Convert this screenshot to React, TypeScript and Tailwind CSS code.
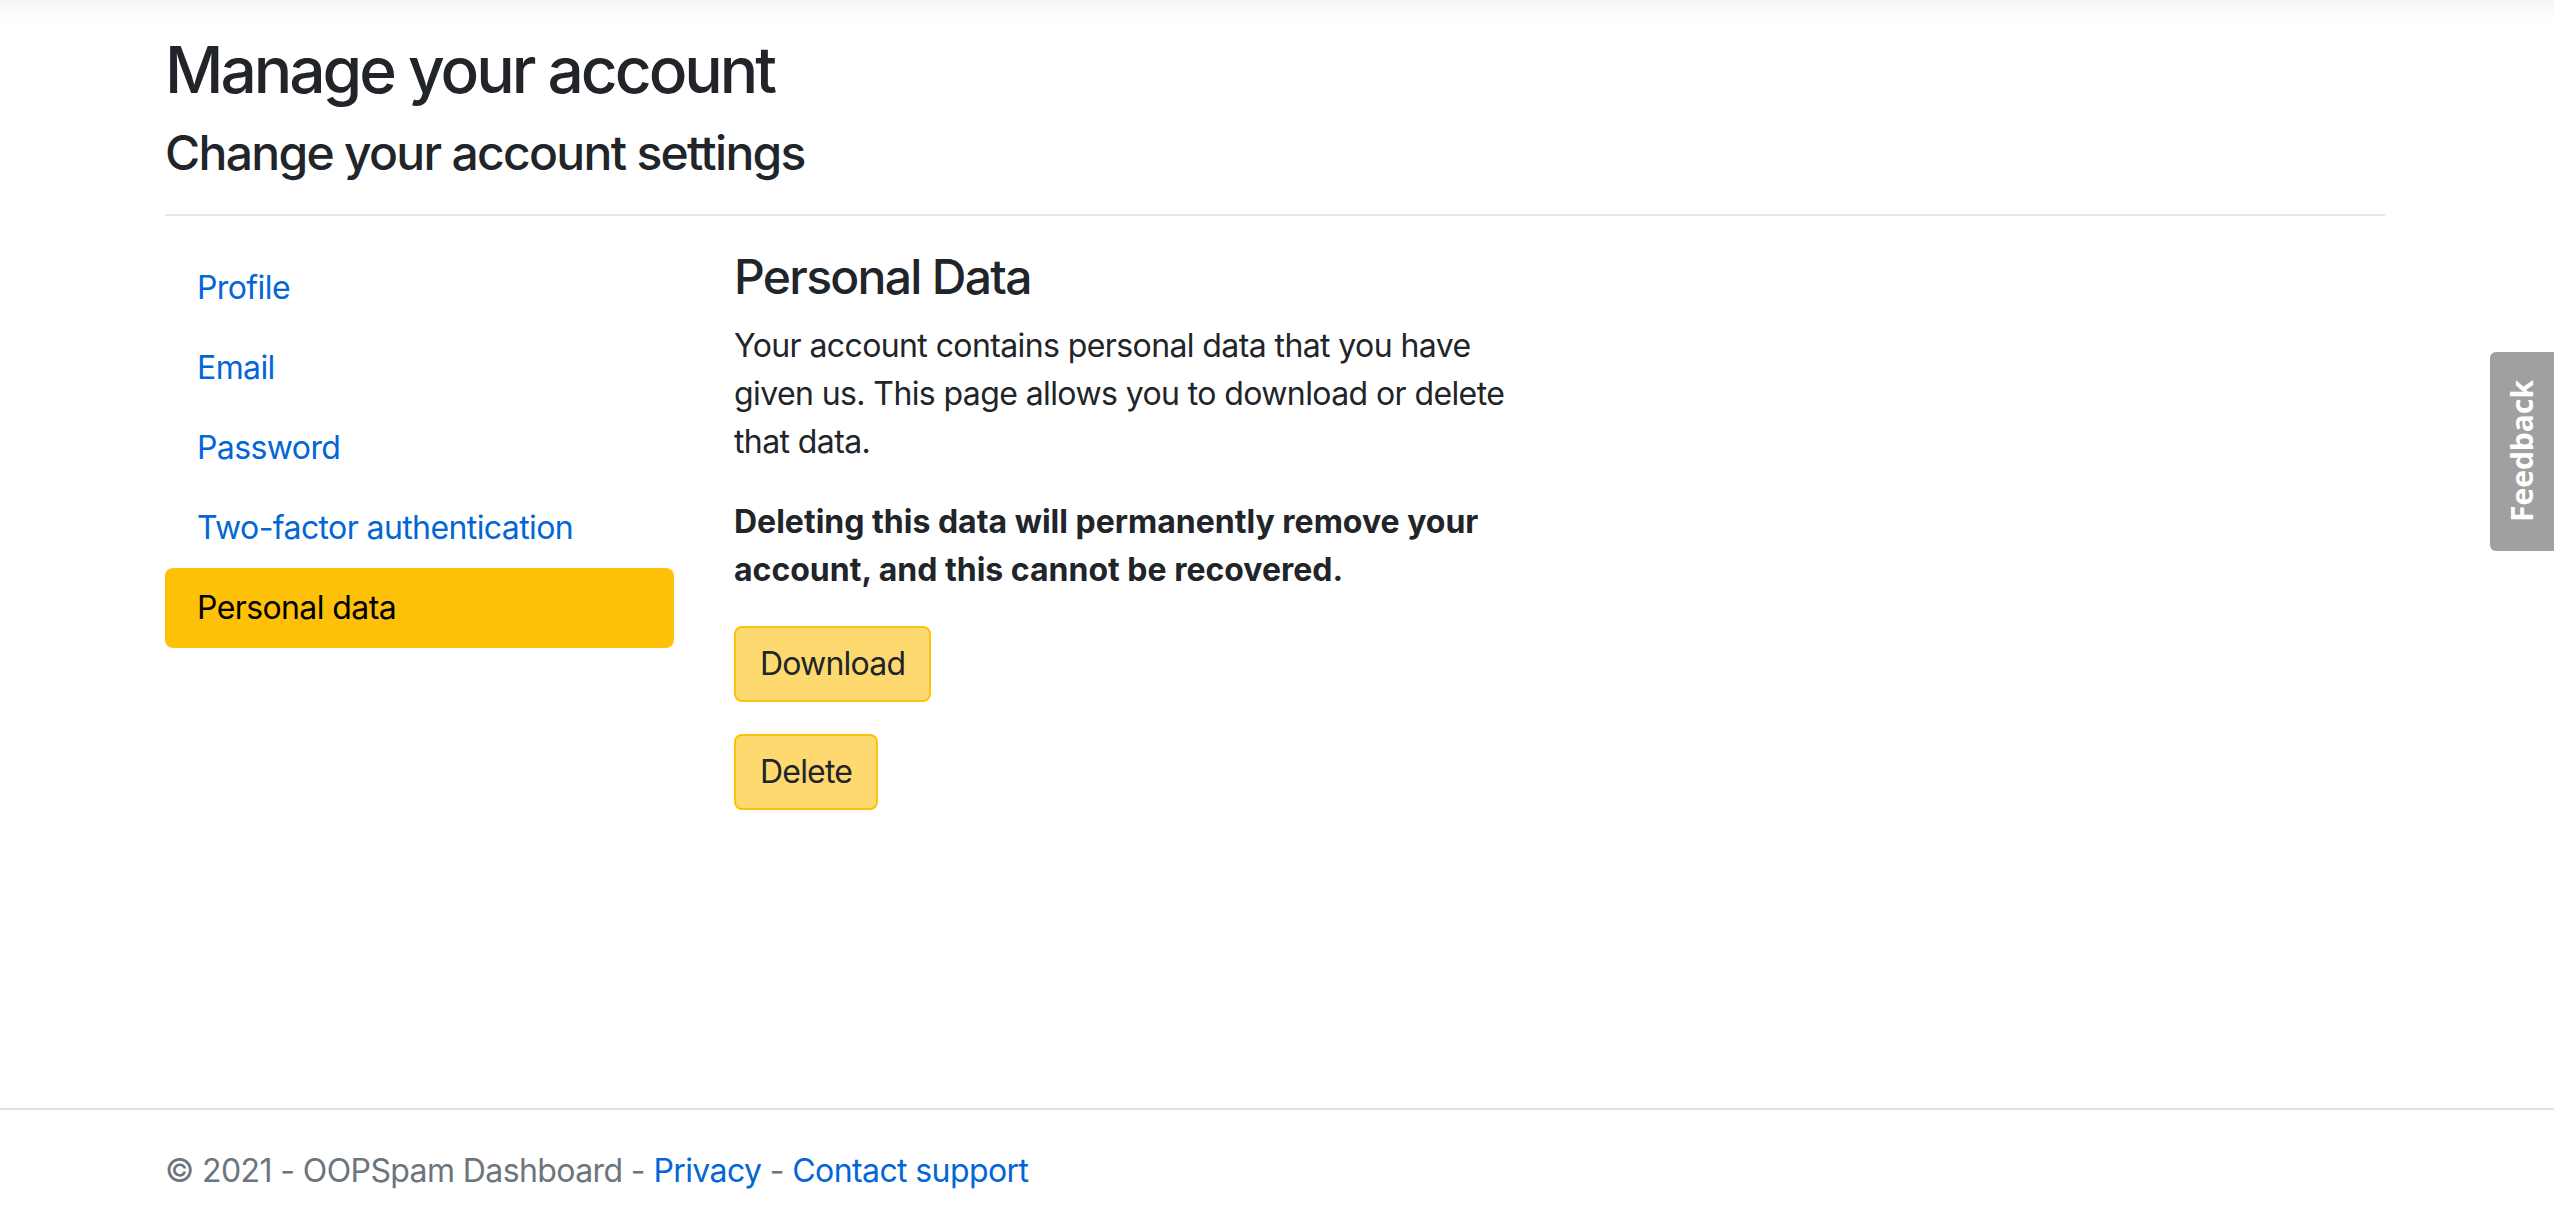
import React from "react";

const navItems = [
  { label: "Profile", active: false },
  { label: "Email", active: false },
  { label: "Password", active: false },
  { label: "Two-factor authentication", active: false },
  { label: "Personal data", active: true },
];

export default function App() {
  return (
    <div
      className="min-h-screen flex flex-col bg-white text-[#212529] shadow-[inset_0_24px_22px_-18px_rgba(0,0,0,0.06)]"
      style={{ fontFamily: "Inter, 'Noto Sans', sans-serif" }}
    >
      <main className="flex-1 w-[2220px] ml-[165px]">
        <h1 className="mt-[31px] text-[64px] leading-[77px] font-medium tracking-[-3px]">Manage your account</h1>
        <h4 className="mt-[16px] text-[48px] leading-[58px] font-medium tracking-[-1.7px]">Change your account settings</h4>
        <hr className="mt-[32px] border-0 border-t-2 border-[#e6e6e6]" />
        <div className="mt-[32px] flex gap-[60px]">
          <ul className="w-[509px] flex flex-col">
            {navItems.map((item) => (
              <li key={item.label}>
                <a
                  href="#"
                  className={
                    item.active
                      ? "flex items-center h-[80px] px-[32px] rounded-[8px] bg-[#ffc107] text-black text-[32px] leading-[48px] tracking-[-0.6px]"
                      : "flex items-center h-[80px] px-[32px] rounded-[8px] text-[#0366d6] text-[32px] leading-[48px] tracking-[-0.6px]"
                  }
                >
                  {item.label}
                </a>
              </li>
            ))}
          </ul>
          <div className="w-[790px]">
            <h4 className="text-[48px] leading-[58px] font-medium tracking-[-1.7px]">Personal Data</h4>
            <p className="mt-[16px] text-[32px] leading-[48px] tracking-[-0.6px]">
              Your account contains personal data that you have given us. This page allows you to download or delete that data.
            </p>
            <p className="mt-[32px] text-[32px] leading-[48px] font-bold">
              Deleting this data will permanently remove your account, and this cannot be recovered.
            </p>
            <div className="mt-[32px] flex flex-col items-start gap-[32px]">
              <button className="px-[24px] py-[12px] border-2 border-[#ffc107] bg-[#fed970] rounded-[8px] text-[32px] leading-[48px] tracking-[-0.8px] text-[#212529]">
                Download
              </button>
              <button className="px-[24px] py-[12px] border-2 border-[#ffc107] bg-[#fed970] rounded-[8px] text-[32px] leading-[48px] tracking-[-0.8px] text-[#212529]">
                Delete
              </button>
            </div>
          </div>
        </div>
      </main>
      <footer className="border-t-2 border-[#dee2e6] h-[124px] flex items-center">
        <div className="ml-[165px] text-[32px] leading-[48px] tracking-[-0.6px] text-[#6c757d] whitespace-nowrap">
          © 2021 - OOPSpam Dashboard - <a href="#" className="text-[#0366d6]">Privacy</a> -{" "}
          <a href="#" className="text-[#0366d6]">Contact support</a>
        </div>
      </footer>
      <div className="fixed right-0 top-[352px] w-[64px] h-[199px] bg-[#a0a0a0] rounded-l-[6px] flex items-center justify-center">
        <span
          className="[writing-mode:vertical-rl] rotate-180 text-white font-bold text-[30px] leading-none"
          style={{ fontFamily: "'Open Sans', sans-serif" }}
        >
          Feedback
        </span>
      </div>
    </div>
  );
}
